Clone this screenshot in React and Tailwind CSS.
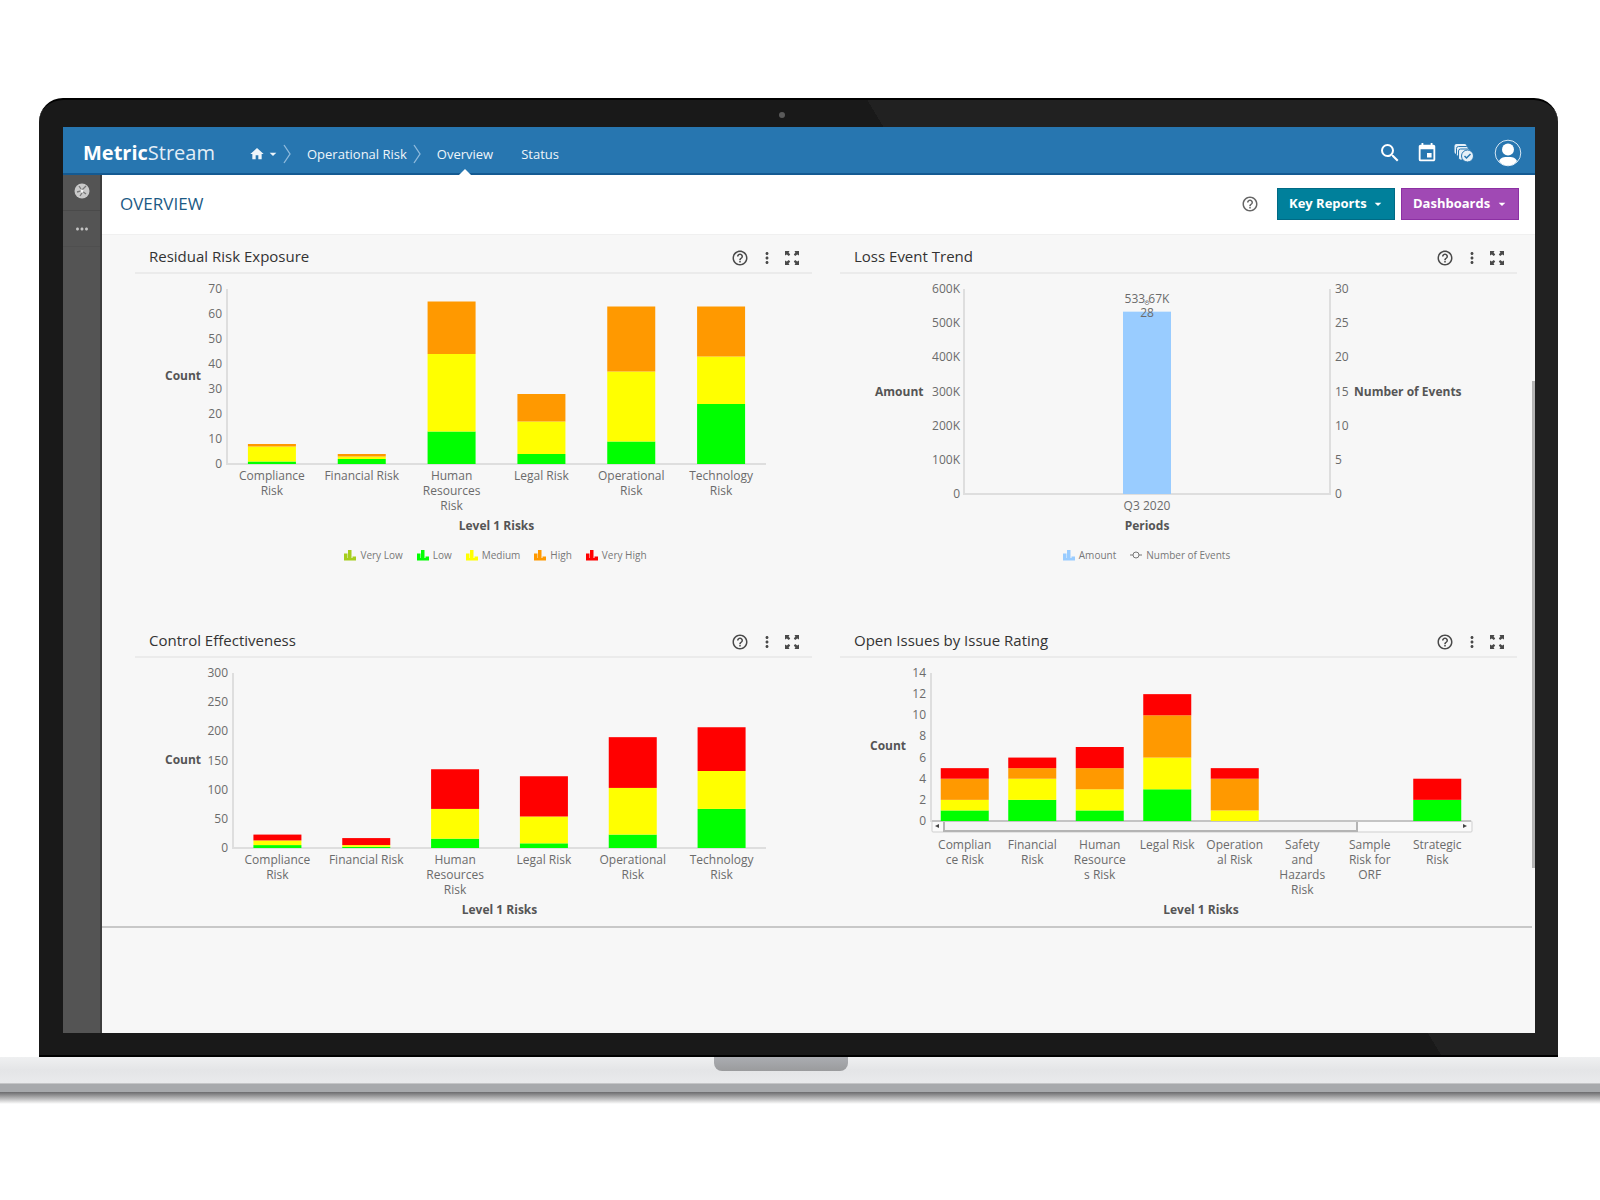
import { MdArrowDropDown, MdEvent, MdHelpOutline, MdHome, MdMoreHoriz, MdMoreVert, MdSearch } from 'react-icons/md';

const COLORS = {
  veryLow: '#a6ce1c',
  low: '#00ff00',
  medium: '#ffff00',
  high: '#ff9900',
  veryHigh: '#ff0000',
  amount: '#99ccff',
};

const CHART_FONT = '"Open Sans", sans-serif';
const LINE_HEIGHT = 15;
const BAR_WIDTH = 48;

const RESIDUAL_RISK = [
  { label: ['Compliance', 'Risk'], low: 1, medium: 6, high: 1 },
  { label: ['Financial Risk'], low: 2, medium: 1, high: 1 },
  { label: ['Human', 'Resources', 'Risk'], low: 13, medium: 31, high: 21 },
  { label: ['Legal Risk'], low: 4, medium: 13, high: 11 },
  { label: ['Operational', 'Risk'], low: 9, medium: 28, high: 26 },
  { label: ['Technology', 'Risk'], low: 24, medium: 19, high: 20 },
];

const CONTROL_EFFECTIVENESS = [
  { label: ['Compliance', 'Risk'], low: 5, medium: 8, veryHigh: 10 },
  { label: ['Financial Risk'], low: 2, medium: 3, veryHigh: 12 },
  { label: ['Human', 'Resources', 'Risk'], low: 16, medium: 51, veryHigh: 68 },
  { label: ['Legal Risk'], low: 8, medium: 46, veryHigh: 69 },
  { label: ['Operational', 'Risk'], low: 23, medium: 80, veryHigh: 87 },
  { label: ['Technology', 'Risk'], low: 67, medium: 65, veryHigh: 75 },
];

const OPEN_ISSUES = [
  { label: ['Complian', 'ce Risk'], low: 1, medium: 1, high: 2, veryHigh: 1 },
  { label: ['Financial', 'Risk'], low: 2, medium: 2, high: 1, veryHigh: 1 },
  { label: ['Human', 'Resource', 's Risk'], low: 1, medium: 2, high: 2, veryHigh: 2 },
  { label: ['Legal Risk'], low: 3, medium: 3, high: 4, veryHigh: 2 },
  { label: ['Operation', 'al Risk'], medium: 1, high: 3, veryHigh: 1 },
  { label: ['Safety', 'and', 'Hazards', 'Risk'] },
  { label: ['Sample', 'Risk for', 'ORF'] },
  { label: ['Strategic', 'Risk'], low: 2, veryHigh: 2 },
];

const RISK_LEGEND = [
  { name: 'Very Low', color: COLORS.veryLow },
  { name: 'Low', color: COLORS.low },
  { name: 'Medium', color: COLORS.medium },
  { name: 'High', color: COLORS.high },
  { name: 'Very High', color: COLORS.veryHigh },
];

function range(max, step) {
  return Array.from({ length: max / step + 1 }, (_, i) => i * step);
}

// y is the vertical middle of the text
function Label({ x, y, anchor = 'middle', bold, children }) {
  return (
    <text
      x={x}
      y={y + 4}
      textAnchor={anchor}
      fontSize="12"
      fontFamily={CHART_FONT}
      fontWeight={bold ? 700 : 400}
      fill={bold ? '#555555' : '#6b6b6b'}
    >
      {children}
    </text>
  );
}

function ChartFrame({ title, children }) {
  return (
    <svg viewBox="0 0 677 268" className="block w-full" role="img" aria-label={title}>
      {children}
    </svg>
  );
}

function StackedChart({ title, data, max, step, left, base, labelGap = 12, scroll }) {
  const top = 15;
  const right = 631;
  const unit = (base - top) / max;
  const band = (right - left) / data.length;

  return (
    <ChartFrame title={title}>
      <path d={`M${left} ${top}V${base}H${right}`} fill="none" stroke="#dedede" strokeWidth="2" />
      {range(max, step).map((v) => (
        <Label key={v} x={left - 5} y={base - v * unit} anchor="end">
          {v}
        </Label>
      ))}
      <Label x={30} y={(top + base) / 2 - 1} anchor="start" bold>
        Count
      </Label>
      {scroll && <ChartScroller left={left} right={right} y={base} />}
      {data.map((row, i) => {
        const center = left + band * (i + 0.5);
        let total = 0;
        return (
          <g key={i}>
            {['low', 'medium', 'high', 'veryHigh'].map((level) => {
              if (!row[level]) return null;
              total += row[level];
              return (
                <rect
                  key={level}
                  x={center - BAR_WIDTH / 2}
                  y={base - total * unit}
                  width={BAR_WIDTH}
                  height={row[level] * unit}
                  fill={COLORS[level]}
                />
              );
            })}
            {row.label.map((line, n) => (
              <Label key={line} x={center} y={base + labelGap + n * LINE_HEIGHT}>
                {line}
              </Label>
            ))}
          </g>
        );
      })}
      <Label x={(left + right) / 2} y={252} bold>
        Level 1 Risks
      </Label>
    </ChartFrame>
  );
}

function ChartScroller({ left, right, y }) {
  return (
    <g>
      <rect x={left + 1} y={y} width={right - left} height="11" rx="1" fill="#fafafa" stroke="#cfcfcf" />
      <rect x={left + 13} y={y} width="413" height="10" fill="#f4f4f4" />
      <path d={`M${left + 13} ${y}V${y + 10}H${left + 426}V${y}`} fill="none" stroke="#b4b4b4" strokeWidth="2" />
      <path d={`M${left + 1} ${y}H${right}`} stroke="#c4c4c4" strokeWidth="2" />
      <path d={`M${left + 4} ${y + 5}l4 -2v4z`} fill="#444444" />
      <path d={`M${right - 4} ${y + 5}l-4 -2v4z`} fill="#444444" />
    </g>
  );
}

function LossTrendChart({ title }) {
  const left = 124;
  const right = 490;
  const top = 15;
  const base = 220;
  const height = base - top;
  const center = (left + right) / 2;
  const barHeight = (533.67 / 600) * height;

  return (
    <ChartFrame title={title}>
      <path d={`M${left} ${top}V${base}H${right}V${top}`} fill="none" stroke="#dedede" strokeWidth="2" />
      {range(600, 100).map((v) => (
        <Label key={v} x={left - 4} y={base - (v / 600) * height} anchor="end">
          {v ? `${v}K` : 0}
        </Label>
      ))}
      {range(30, 5).map((v) => (
        <Label key={v} x={right + 5} y={base - (v / 30) * height} anchor="start">
          {v}
        </Label>
      ))}
      <Label x={35} y={(top + base) / 2} anchor="start" bold>
        Amount
      </Label>
      <Label x={right + 24} y={(top + base) / 2} anchor="start" bold>
        Number of Events
      </Label>
      <rect x={center - BAR_WIDTH / 2} y={base - barHeight} width={BAR_WIDTH} height={barHeight} fill={COLORS.amount} />
      <circle cx={center} cy={base - (28 / 30) * height} r="2" fill="#ffffff" stroke="#a0a0a0" />
      <Label x={center} y={25}>
        533.67K
      </Label>
      <Label x={center} y={39}>
        28
      </Label>
      <Label x={center} y={base + 12}>
        Q3 2020
      </Label>
      <Label x={center} y={252} bold>
        Periods
      </Label>
    </ChartFrame>
  );
}

function Legend({ items, className }) {
  return (
    <ul className={`mt-[5px] flex h-4 items-center justify-center gap-3.5 text-[10px] leading-4 text-[#777777] ${className}`}>
      {items.map((item) => (
        <li key={item.name} className="flex items-center gap-1">
          {item.line ? (
            <svg viewBox="0 0 12 12" className="h-3 w-3" fill="none" stroke="#777777">
              <path d="M0 6h3M9 6h3" />
              <circle cx="6" cy="6" r="3" />
            </svg>
          ) : (
            <svg viewBox="0 0 12 12" className="h-3 w-3" fill={item.color}>
              <path d="M0 4.500h3.500V10H0zM4 1h3.500v9H4zM8.500 7.500H12V10H8.500zM0 9h12v2.500H0z" />
            </svg>
          )}
          {item.name}
        </li>
      ))}
    </ul>
  );
}

function ExpandIcon() {
  return (
    <svg viewBox="0 0 14 14" className="h-[14px] w-[14px]" fill="currentColor">
      <path d="M0 0h4.500L3.600 1.600 5.200 3.500 3.800 4.900 1.800 3.400 0 4.500z" />
      <path d="M14 0v4.500l-1.800-1.100-2 1.500-1.400-1.400 1.600-1.900L9.500 0z" />
      <path d="M0 14V9.500l1.800 1.100 2-1.500 1.400 1.400-1.600 1.900.9 1.600z" />
      <path d="M14 14H9.500l.9-1.600-1.600-1.900 1.400-1.400 2 1.500L14 9.500z" />
    </svg>
  );
}

function Card({ title, children }) {
  return (
    <section>
      <header className="flex h-[39px] items-center justify-between border-b-2 border-[#ebebeb] pt-2 pr-[13px] pl-[14px]">
        <h2 className="pb-1 text-[15px] leading-5 font-medium text-[#333333]">{title}</h2>
        <div className="flex items-center gap-[9px] text-[#4a4a4a]">
          <button type="button" aria-label="Help">
            <MdHelpOutline className="h-[18px] w-[18px]" />
          </button>
          <button type="button" aria-label="More options">
            <MdMoreVert className="h-[18px] w-[18px]" />
          </button>
          <button type="button" aria-label="Expand">
            <ExpandIcon />
          </button>
        </div>
      </header>
      {children}
    </section>
  );
}

function Chevron() {
  return (
    <svg viewBox="0 0 8 20" className="h-5 w-2" fill="none" stroke="#8fbbdc" strokeWidth="1.3">
      <path d="M1 1l6 9-6 9" />
    </svg>
  );
}

function TasksIcon() {
  return (
    <svg viewBox="0 0 20 20" className="h-5 w-5">
      <rect x="0.500" y="1" width="12" height="10" rx="2" fill="#e6f0f8" />
      <rect x="2.500" y="3.500" width="12" height="10" rx="2" fill="#e6f0f8" stroke="#2776b0" />
      <rect x="4.500" y="6" width="12" height="11" rx="2" fill="#e6f0f8" stroke="#2776b0" />
      <circle cx="13.500" cy="13" r="6" fill="#e6f0f8" stroke="#2776b0" />
      <path d="M10.500 13l2 2 4-4" fill="none" stroke="#2776b0" strokeWidth="1.500" />
    </svg>
  );
}

function UserIcon() {
  return (
    <svg viewBox="0 0 28 28" className="h-7 w-7">
      <circle cx="14" cy="14" r="12.8" fill="#2776b0" stroke="#d5e6f3" />
      <circle cx="14" cy="10.500" r="6" fill="#ffffff" />
      <path d="M5 22c2-4 5-4 9-4s7 0 9 4c-2 3-5 4.500-9 4.500S7 25 5 22z" fill="#ffffff" />
    </svg>
  );
}

function TopBar() {
  return (
    <header className="flex h-12 items-center border-b-2 border-[#145a92] bg-[#2776b0] pr-[13px] pl-5 text-white">
      <div className="w-[166px] pt-1.5 text-[20px] leading-8">
        <span className="font-bold">Metric</span>
        <span className="text-[#e3eef7]">Stream</span>
      </div>
      <nav className="flex h-full flex-1 items-center text-[13px] leading-5 font-medium text-[#eef5fa]">
        <a href="#home" aria-label="Home" className="mr-0.5 flex items-center pt-2">
          <MdHome className="h-4 w-4" />
          <MdArrowDropDown className="h-4 w-4" />
        </a>
        <span className="pt-2">
          <Chevron />
        </span>
        <a href="#operational-risk" className="mr-1.5 ml-4 pt-2">
          Operational Risk
        </a>
        <span className="pt-2">
          <Chevron />
        </span>
        <a href="#overview" className="relative ml-4 flex h-full items-center pt-2" aria-current="page">
          Overview
          <span className="absolute -bottom-0.5 left-1/2 -ml-1.5 border-x-6 border-b-6 border-x-transparent border-b-white" />
        </a>
        <a href="#status" className="ml-7 pt-2">
          Status
        </a>
      </nav>
      <div className="flex items-center pt-1.5">
        <button type="button" aria-label="Search" className="mr-[14px]">
          <MdSearch className="h-6 w-6" />
        </button>
        <button type="button" aria-label="Calendar" className="mr-4">
          <MdEvent className="h-[22px] w-[22px]" />
        </button>
        <button type="button" aria-label="Tasks" className="mr-5">
          <TasksIcon />
        </button>
        <button type="button" aria-label="Account">
          <UserIcon />
        </button>
      </div>
    </header>
  );
}

function Sidebar() {
  return (
    <aside className="flex w-[39px] shrink-0 flex-col items-center border-r-2 border-[#3d3d3d] bg-[#545454] text-[#c4c4c4]">
      <button type="button" aria-label="Compass" className="flex h-9 w-full items-center justify-center border-b border-[#4a4a4a] pb-1">
        <svg viewBox="0 0 16 16" className="h-4 w-4">
          <circle cx="8" cy="8" r="7.500" fill="#c9c9c9" />
          <path d="M3 9l4-1 5-5M8 8l4 3M5 3l2 3M6 13l2-3" stroke="#777777" fill="none" strokeWidth="1.3" />
          <circle cx="8" cy="8" r="1.500" fill="#f5f5f5" />
        </svg>
      </button>
      <button type="button" aria-label="More" className="flex h-9 w-full items-center justify-center border-b border-[#4f4f4f]">
        <MdMoreHoriz className="h-[18px] w-[18px]" />
      </button>
    </aside>
  );
}

function MenuButton({ className, children }) {
  return (
    <button
      type="button"
      className={`flex h-8 w-[118px] items-center justify-between border pr-2 pl-[11px] text-[13px] font-bold text-white ${className}`}
    >
      {children}
      <MdArrowDropDown className="h-4 w-4" />
    </button>
  );
}

export default function App() {
  return (
    <div className="min-h-screen overflow-hidden bg-white pt-[98px] font-['Open_Sans',sans-serif]">
      {/* Lid */}
      <div className="relative mr-[42px] ml-[39px] rounded-t-[24px] border-t-2 border-b-2 border-black bg-[linear-gradient(59deg,#191919_67%,#212121_67%)] pt-[27px] pr-[23px] pb-[22px] pl-6">
        <span className="absolute top-3 left-1/2 -ml-5 h-1.5 w-1.5 rounded-full bg-[#5a5a5a]" />

        <div className="relative bg-[#f7f7f7]">
          <TopBar />
          <div className="flex">
            <Sidebar />
            <main className="min-w-0 flex-1 pb-[105px]">
              <div className="flex h-[60px] items-center gap-1.5 border-b border-[#f0f0f0] bg-white pr-4 pb-0.5 pl-[18px]">
                <h1 className="flex-1 text-[17px] leading-6 font-medium text-[#1c5a85]">OVERVIEW</h1>
                <button type="button" aria-label="Help" className="mr-3 text-[#666666]">
                  <MdHelpOutline className="h-[18px] w-[18px]" />
                </button>
                <MenuButton className="border-[#006a85] bg-[#00809b]">Key Reports</MenuButton>
                <MenuButton className="border-[#8c30a3] bg-[#a049b4]">Dashboards</MenuButton>
              </div>

              <div className="mr-[3px] grid grid-cols-2 gap-x-7 gap-y-14 border-b-2 border-[#c8c8c8] pr-[15px] pl-[33px]">
                <Card title="Residual Risk Exposure">
                  <StackedChart title="Residual Risk Exposure" data={RESIDUAL_RISK} max={70} step={10} left={92} base={190} />
                  <Legend items={RISK_LEGEND} className="pl-11" />
                </Card>
                <Card title="Loss Event Trend">
                  <LossTrendChart title="Loss Event Trend" />
                  <Legend
                    items={[
                      { name: 'Amount', color: COLORS.amount },
                      { name: 'Number of Events', line: true },
                    ]}
                    className="pr-16"
                  />
                </Card>
                <Card title="Control Effectiveness">
                  <StackedChart title="Control Effectiveness" data={CONTROL_EFFECTIVENESS} max={300} step={50} left={98} base={190} />
                </Card>
                <Card title="Open Issues by Issue Rating">
                  <StackedChart title="Open Issues by Issue Rating" data={OPEN_ISSUES} max={14} step={2} left={91} base={163} labelGap={24} scroll />
                </Card>
              </div>
            </main>
          </div>
          {/* Page scrollbar */}
          <span className="absolute top-[254px] right-0 h-[487px] w-[3px] bg-[#b5b5b5]" />
        </div>
      </div>

      {/* Keyboard base */}
      <div className="h-[26px] bg-linear-to-b from-[#eff0f1] via-[#e4e5e7] to-[#e9eaec] pr-[39px]">
        <div className="mx-auto h-[14px] w-[134px] rounded-b-lg bg-linear-to-b from-[#abadb2] to-[#9a9b9d]" />
      </div>
      <div className="h-[9px] border-t border-[#c4c5c7] bg-[#a7a9ac]" />
      <div className="h-3 bg-linear-to-b from-[#6c6c6e] to-white" />
    </div>
  );
}
